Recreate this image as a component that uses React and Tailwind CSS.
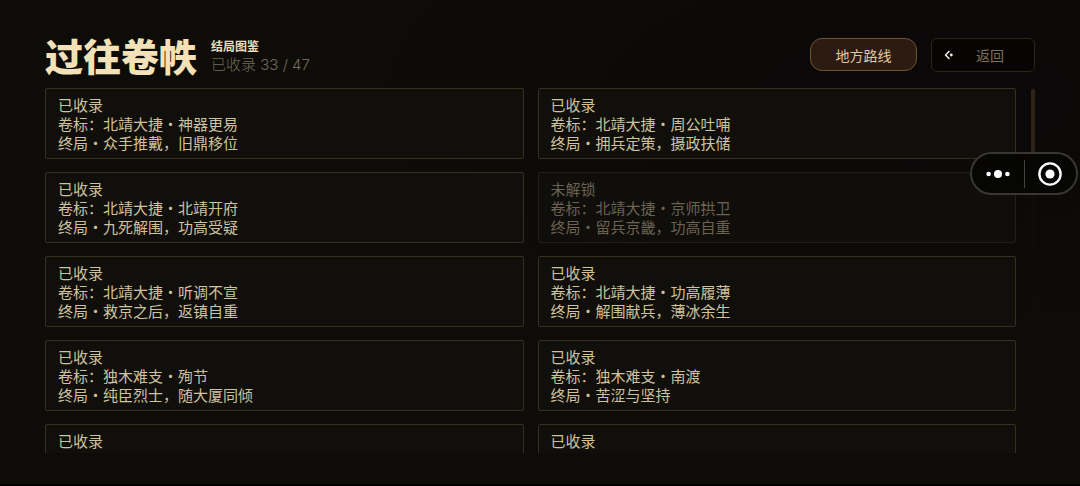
const entries = [
  { title: '北靖大捷・神器更易', ending: '众手推戴，旧鼎移位' },
  { title: '北靖大捷・周公吐哺', ending: '拥兵定策，摄政扶储' },
  { title: '北靖大捷・北靖开府', ending: '九死解围，功高受疑' },
  { title: '北靖大捷・京师拱卫', ending: '留兵京畿，功高自重', locked: true },
  { title: '北靖大捷・听调不宣', ending: '救京之后，返镇自重' },
  { title: '北靖大捷・功高履薄', ending: '解围献兵，薄冰余生' },
  { title: '独木难支・殉节', ending: '纯臣烈士，随大厦同倾' },
  { title: '独木难支・南渡', ending: '苦涩与坚持' },
  { title: '东南砥柱・转播', ending: '孤臣远走' },
  { title: '东南砥柱・立', ending: '江左偏安' },
];

function Card({ title, ending, locked }) {
  return (
    <li
      className={`h-[71px] rounded-xs border px-3 pt-[6px] text-[15px] leading-[19px] ${
        locked
          ? 'border-[#222016] bg-[#0f0e0b] text-[#6b624f]'
          : 'border-[#353020] bg-[#100f0b] text-[#cfc29f]'
      }`}
    >
      <p>{locked ? '未解锁' : '已收录'}</p>
      <p>卷标：{title}</p>
      <p>终局・{ending}</p>
    </li>
  );
}

function BackIcon() {
  return (
    <svg viewBox="0 0 10 12" className="h-3 w-2.5" fill="none" aria-hidden="true">
      <path d="M5.4 2 1.6 6l3.8 4" stroke="#f4efe4" strokeWidth="1.5" />
      <circle cx="7.3" cy="6" r="1.4" fill="#f4efe4" />
    </svg>
  );
}

export default function App() {
  return (
    <div
      lang="zh-CN"
      className="relative flex h-screen flex-col border-b-2 border-black bg-[#0d0c09] bg-[radial-gradient(ellipse_at_85%_20%,#0a0808_0%,transparent_45%)] px-[45px] pb-[31px] font-['Noto_Sans_CJK_SC',sans-serif]"
    >
      <header className="flex h-[88px] shrink-0 items-start pt-[38px]">
        <h1 className="text-[38px] leading-[34px] font-black text-[#f3e2b8]">过往卷帙</h1>
        <div className="ml-3.5">
          <h2 className="text-xs leading-4 font-bold text-[#e9dcb8]">结局图鉴</h2>
          <p className="font-[Inter,'Noto_Sans_CJK_SC',sans-serif] text-[15px] leading-[22px] font-light text-[#736b58]">
            已收录 33 / 47
          </p>
        </div>
        <div className="ml-auto flex gap-3.5 text-sm">
          <button
            type="button"
            className="h-[33px] w-[107px] rounded-xl border border-[#71532f] bg-[#2c1b10] text-[#e0c7a0]"
          >
            地方路线
          </button>
          <button
            type="button"
            className="flex h-[34px] w-[104px] items-center rounded-md border border-[#2b2619] bg-[#060504] pl-3 text-[#807059]"
          >
            <BackIcon />
            <span className="ml-[22px]">返回</span>
          </button>
        </div>
      </header>

      <main className="flex min-h-0 flex-1 gap-[15px]">
        <ul className="grid flex-1 grid-cols-2 content-start gap-x-3.5 gap-y-[13px] overflow-y-auto [scrollbar-width:none]">
          {entries.map((entry, i) => (
            <Card key={i} {...entry} />
          ))}
        </ul>
        <div className="w-1 bg-[#100b09]">
          <div className="mt-px h-[68px] rounded-xs bg-[#2f2218]" />
        </div>
      </main>

      <div className="absolute top-[152px] right-0.5 flex h-[43px] w-[108px] items-center rounded-full border-2 border-[#383735] bg-[#050504]/90">
        <button type="button" aria-label="更多" className="flex h-full flex-1 items-center justify-center">
          <svg viewBox="0 0 24 10" className="h-2.5 w-6" fill="#fff" aria-hidden="true">
            <circle cx="2.6" cy="5" r="2.3" />
            <circle cx="12" cy="5" r="4" />
            <circle cx="21.4" cy="5" r="2.3" />
          </svg>
        </button>
        <span className="h-7 w-px bg-[#444341]" />
        <button type="button" aria-label="关闭" className="flex h-full flex-1 items-center justify-center">
          <svg viewBox="0 0 24 24" className="size-6" fill="none" aria-hidden="true">
            <circle cx="12" cy="12" r="10.6" stroke="#fff" strokeWidth="2.4" />
            <circle cx="12" cy="12" r="4.6" fill="#fff" />
          </svg>
        </button>
      </div>
    </div>
  );
}
